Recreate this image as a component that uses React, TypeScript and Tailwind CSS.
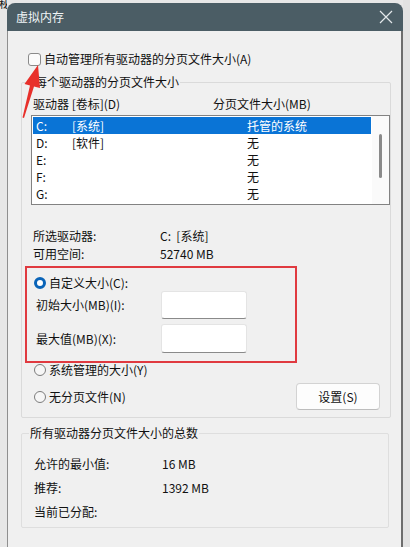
import React from 'react';

const drives = [
  { d: 'C:', label: '[系统]', size: '托管的系统', selected: true },
  { d: 'D:', label: '[软件]', size: '无' },
  { d: 'E:', label: '', size: '无' },
  { d: 'F:', label: '', size: '无' },
  { d: 'G:', label: '', size: '无' },
];

const Radio: React.FC<{ checked?: boolean }> = ({ checked }) =>
  checked ? (
    <span className="w-[12px] h-[12px] rounded-full border-[3px] border-[#0a64b8] bg-white shrink-0" />
  ) : (
    <span className="w-[12px] h-[12px] rounded-full border border-[#7c7c7c] bg-[#f6f6f6] shrink-0" />
  );

const App: React.FC = () => {
  return (
    <div className="relative w-[410px] h-[547px] overflow-hidden flex bg-[#e7e7e7] text-[#111] text-[12px] font-['Noto_Sans_CJK_SC','Microsoft_YaHei',sans-serif]">
      {/* page behind the dialog */}
      <div className="w-[7px] shrink-0 overflow-hidden">
        <span className="block -mt-[4px] -ml-[1px] text-[12px] leading-[14px] text-[#222]">秘</span>
      </div>

      {/* dialog */}
      <div className="w-[396px] shrink-0 mt-[3px] flex flex-col">
        <div className="h-[28px] shrink-0 bg-[#4b5d65] rounded-t-[8px] flex items-center justify-between pl-[9px] pr-[10px]">
          <span className="text-[#f0f4f5] text-[12px] leading-[16px]">虚拟内存</span>
          <svg width="14" height="14" viewBox="0 0 14 14" className="text-[#e3e8ea]">
            <path d="M1 1 L13 13 M13 1 L1 13" stroke="currentColor" strokeWidth="1.2" fill="none" />
          </svg>
        </div>

        <div className="flex-1 bg-[#f0f0f0] border-l border-[#8f8f8f] border-r-2 border-r-[#6d6d6d] pl-[13px] pt-[20px]">
          {/* auto manage checkbox */}
          <div className="flex items-center h-[16px] pl-[7px]">
            <span className="w-[13px] h-[13px] rounded-[3px] border border-[#8a8a8a] bg-[#fbfbfb] shrink-0" />
            <span className="ml-[3px] leading-[16px]">自动管理所有驱动器的分页文件大小(A)</span>
          </div>

          {/* per-drive group */}
          <fieldset className="mt-[6px] w-[369px] border border-[#dadada] rounded-[2px] pb-[7px]">
            <legend className="ml-[12px] px-[1px] leading-[18px]">每个驱动器的分页文件大小</legend>

            <div className="mt-[5px] ml-[11px] flex h-[16px] leading-[16px]">
              <span className="w-[180px]">驱动器 [卷标](D)</span>
              <span>分页文件大小(MB)</span>
            </div>

            <div className="mt-[3px] ml-[9px] w-[359px] h-[90px] border border-[#828282] bg-white flex">
              <div className="flex-1 pt-[1px]">
                {drives.map(r => (
                  <div
                    key={r.d}
                    className={
                      r.selected
                        ? 'ml-[1px] w-[338px] h-[17px] flex items-center pl-[3px] leading-[16px] bg-[#0a74d6] text-white'
                        : 'ml-[1px] w-[338px] h-[17px] flex items-center pl-[3px] leading-[16px]'
                    }
                  >
                    <span className="w-[36px]">{r.d}</span>
                    <span className="w-[175px]">{r.label}</span>
                    <span>{r.size}</span>
                  </div>
                ))}
              </div>
              <div className="w-[17px] shrink-0 bg-[#fafafa]">
                <div className="ml-[7px] mt-[18px] w-[3px] h-[44px] rounded-full bg-[#8a8a8a]" />
              </div>
            </div>

            <div className="mt-[22px] ml-[11px] flex h-[18px] items-center">
              <span className="w-[127px]">所选驱动器:</span>
              <span>C:&nbsp;&nbsp;[系统]</span>
            </div>
            <div className="ml-[11px] flex h-[18px] items-center">
              <span className="w-[127px]">可用空间:</span>
              <span>52740 MB</span>
            </div>

            {/* custom size, boxed in red */}
            <div className="mt-[3px] ml-[3px] w-[272px] h-[97px] border-2 border-[#e03a40] pt-[7px]">
              <div className="flex items-center h-[16px] pl-[7px]">
                <Radio checked />
                <span className="ml-[3px] leading-[16px]">自定义大小(C):</span>
              </div>
              <div className="flex items-center h-[28px] pl-[9px]">
                <span className="w-[125px]">初始大小(MB)(I):</span>
                <span className="w-[86px] h-[28px] bg-white border border-[#e4e4e4] border-b-[#8a8a8a] rounded-[3px]" />
              </div>
              <div className="mt-[5px] flex items-center h-[29px] pl-[9px]">
                <span className="w-[125px]">最大值(MB)(X):</span>
                <span className="w-[86px] h-[29px] bg-white border border-[#e4e4e4] border-b-[#8a8a8a] rounded-[3px]" />
              </div>
            </div>

            <div className="flex items-center h-[14px] pl-[12px]">
              <Radio />
              <span className="ml-[3px] leading-[16px]">系统管理的大小(Y)</span>
            </div>
            <div className="mt-[6px] flex items-center h-[27px] pl-[12px] pr-[10px]">
              <Radio />
              <span className="ml-[3px] leading-[16px]">无分页文件(N)</span>
              <button className="ml-auto w-[84px] h-[27px] bg-[#fdfdfd] border border-[#d3d3d3] border-b-[#bdbdbd] rounded-[4px] leading-[16px]">
                设置(S)
              </button>
            </div>
          </fieldset>

          {/* totals group */}
          <fieldset className="mt-[6px] w-[368px] border border-[#dedede] rounded-[2px] pb-[3px]">
            <legend className="ml-[7px] px-[1px] leading-[18px]">所有驱动器分页文件大小的总数</legend>
            <div className="mt-[10px] ml-[12px] flex h-[24px] items-center">
              <span className="w-[128px]">允许的最小值:</span>
              <span>16 MB</span>
            </div>
            <div className="ml-[12px] flex h-[24px] items-center">
              <span className="w-[128px]">推荐:</span>
              <span>1392 MB</span>
            </div>
            <div className="ml-[12px] flex h-[24px] items-center">
              <span className="w-[128px]">当前已分配:</span>
              <span></span>
            </div>
          </fieldset>
        </div>
      </div>

      <div className="flex-1 bg-[#e2e2e2]" />

      {/* red annotation arrow */}
      <svg className="absolute left-0 top-0 pointer-events-none" width="60" height="130" viewBox="0 0 60 130">
        <polygon
          points="38,65 40,88 34,86.5 24,118 22.5,117.5 30,85.5 24.5,84"
          fill="#e8302b"
        />
      </svg>
    </div>
  );
};

export default App;
